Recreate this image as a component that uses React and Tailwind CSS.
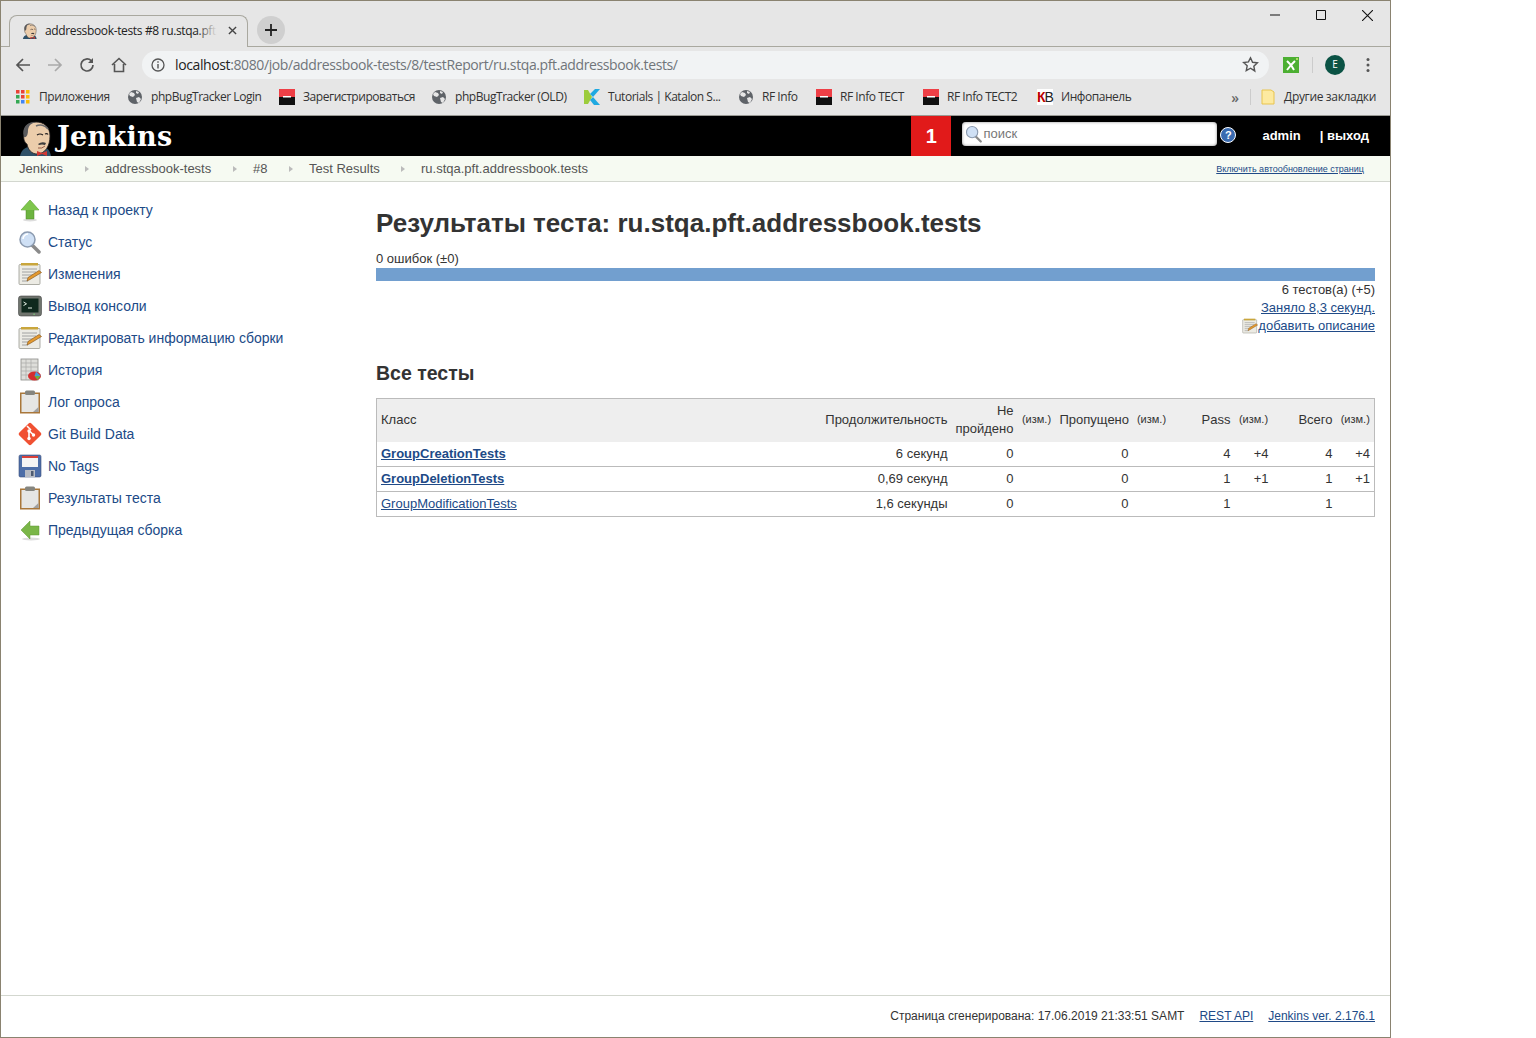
import React from "react";

const Jenkins = ({ className }) => (
  <svg className={className} viewBox="0 0 32 36">
    <path d="M0 36c1-5 4-8 8-9h16c4 1 6 4 7 9z" fill="#2f5168" />
    <path d="M4 15C3 6 9 2 16 2c8 0 14 5 14 14 0 10-5 18-13 18-5 0-9-4-10-10-2-1-4-5-3-9z" fill="#eccdab" stroke="#231f20" strokeWidth="0.8" />
    <path d="M4 17C1 7 8 1 17 2c-6 1-8 3-9 8 0 4-1 8-4 7z" fill="#5a5a5c" />
    <path d="M16 6c4-2 9-1 12 3" fill="none" stroke="#6b6b6d" strokeWidth="1.5" />
    <path d="M17 15q3-2 6 0M25 14q2-1 3 .5" fill="none" stroke="#231f20" strokeWidth="1.2" />
    <path d="M18 24q4-3 8-1l-1 2q-3-1-6 0z" fill="#3d3d3d" />
    <path d="M18 28q4 1 7-2" fill="none" stroke="#8a4f3c" strokeWidth="0.9" />
    <path d="M17 31l5 2 5-2v5l-5-2-5 2z" fill="#d33833" />
  </svg>
);

const Globe = () => (
  <svg className="w-4 h-4 shrink-0" viewBox="0 0 16 16">
    <circle cx="8" cy="8" r="7" fill="#5f6368" />
    <path d="M4 3l3 1 1 2-2 2-3-1-1-2zM9 9l3-1 2 2-2 4-2-1zM9 2l3 1-1 2-2-1z" fill="#e6e6e6" />
  </svg>
);

const Flag = () => (
  <svg className="w-4 h-4 shrink-0" viewBox="0 0 16 16">
    <rect width="16" height="8" fill="#ee3f46" />
    <rect y="8" width="16" height="8" fill="#111" />
    <rect x="4" y="7" width="8" height="1.5" fill="#fff" />
  </svg>
);

const Apps = () => (
  <svg className="w-4 h-4 shrink-0" viewBox="0 0 16 16">
    {[
      [1, 1, "#ea4335"], [6, 1, "#ea4335"], [11, 1, "#fbbc05"],
      [1, 6, "#34a853"], [6, 6, "#ea4335"], [11, 6, "#fbbc05"],
      [1, 11, "#34a853"], [6, 11, "#4285f4"], [11, 11, "#fbbc05"],
    ].map(([x, y, c], i) => (
      <rect key={i} x={x} y={y} width="3.5" height="3.5" fill={c} />
    ))}
  </svg>
);

const Katalon = () => (
  <svg className="w-4 h-4 shrink-0" viewBox="0 0 16 16">
    <path d="M0 1h4l4 7-4 7H0z" fill="#9ccc3c" />
    <path d="M11 0h5L9 8 6 5z" fill="#1fa9e1" />
    <path d="M6 11l3-3 7 8h-6z" fill="#1fa9e1" />
  </svg>
);

const Bookmark = ({ icon, label, w }) => (
  <div className={`flex items-center gap-2 shrink-0 ${w}`}>
    {icon}
    <span className="whitespace-nowrap text-[12px] tracking-[-0.45px] text-[#333]">{label}</span>
  </div>
);

const IconUp = () => (
  <svg viewBox="0 0 24 24" className="w-6 h-6">
    <ellipse cx="12" cy="22" rx="7" ry="1.5" fill="#ddd" />
    <path d="M12 2l9 10h-5v9H8v-9H3z" fill="#6cb33f" stroke="#4c8a26" strokeWidth="0.5" />
    <path d="M12 2l9 10H3z" fill="#7fc64d" />
  </svg>
);
const IconLeft = () => (
  <svg viewBox="0 0 24 24" className="w-6 h-6">
    <ellipse cx="13" cy="21" rx="9" ry="1.5" fill="#ddd" />
    <path d="M3 12l9-9v5h9v9h-9v4z" fill="#7ab648" stroke="#5c9430" strokeWidth="0.5" />
  </svg>
);
const IconSearch = () => (
  <svg viewBox="0 0 24 24" className="w-6 h-6">
    <path d="M14 15l7 7" stroke="#8a8a8a" strokeWidth="3.5" strokeLinecap="round" />
    <circle cx="9.5" cy="9.5" r="7.5" fill="#cfe0f5" stroke="#8c9bb0" strokeWidth="1.5" />
    <path d="M5 9a5 5 0 0 1 5-5" stroke="#fff" strokeWidth="1.5" fill="none" />
  </svg>
);
const IconNote = ({ className = "w-6 h-6" }) => (
  <svg viewBox="0 0 24 24" className={className}>
    <rect x="1" y="2.5" width="21" height="20" rx="1" fill="#ecebe4" stroke="#9a9a92" strokeWidth="0.8" />
    <rect x="3" y="1" width="17" height="2.5" fill="#c9a63c" />
    <path d="M4 7h15M4 10h14M4 13h11M4 16h8M4 19h6" stroke="#8f8f8f" strokeWidth="0.8" />
    <path d="M9 19l1-3.5L21 8.5l2.5 2-11.5 7z" fill="#e49a2f" stroke="#7d4f16" strokeWidth="0.6" />
  </svg>
);
const IconTerminal = () => (
  <svg viewBox="0 0 24 24" className="w-6 h-6">
    <rect x="0.5" y="2" width="23" height="20" rx="2.5" fill="#6f746d" stroke="#444" strokeWidth="0.6" />
    <rect x="3.5" y="4.5" width="17" height="14" fill="#10291e" />
    <path d="M5.5 8l3 1.8-3 1.8M10 14h4" stroke="#e6f0e6" strokeWidth="1" fill="none" />
    <rect x="15.5" y="19.6" width="1.2" height="1.2" fill="#7fe07f" />
  </svg>
);
const IconHistory = () => (
  <svg viewBox="0 0 24 24" className="w-6 h-6">
    <rect x="3" y="1" width="17" height="21" fill="#dededa" stroke="#8c8c88" strokeWidth="0.8" />
    <path d="M3 5h17M3 9h17M3 13h17M3 17h17M8 1v21M13 1v21" stroke="#aaaaa6" strokeWidth="0.7" />
    <ellipse cx="16.5" cy="18" rx="6.5" ry="4.5" fill="#d22f2f" />
    <path d="M16.5 18l1.5-4.5 5 4.5z" fill="#4a9bd6" />
    <path d="M16.5 18l3 4 3-4z" fill="#6cb33f" />
  </svg>
);
const IconClipboard = () => (
  <svg viewBox="0 0 24 24" className="w-6 h-6">
    <rect x="2" y="2.5" width="20" height="21" fill="#a9773a" />
    <rect x="3.5" y="4" width="17" height="18" fill="#e6e6e4" />
    <path d="M15 22l5.5-5V22z" fill="#a0a0a0" />
    <rect x="7" y="0.5" width="10" height="4.5" rx="1.5" fill="#85857f" />
  </svg>
);
const IconGit = () => (
  <svg viewBox="0 0 24 24" className="w-6 h-6">
    <rect x="3.5" y="3.5" width="17" height="17" rx="2" transform="rotate(45 12 12)" fill="#f05133" />
    <path d="M9 4l4 4M11 9v7M11.5 9l4 4" stroke="#fff" strokeWidth="1.6" fill="none" />
    <circle cx="11" cy="9" r="1.7" fill="#fff" />
    <circle cx="11" cy="16.5" r="1.7" fill="#fff" />
    <circle cx="15.5" cy="13" r="1.7" fill="#fff" />
  </svg>
);
const IconSave = () => (
  <svg viewBox="0 0 24 24" className="w-6 h-6">
    <rect x="1" y="1" width="22" height="22" rx="1.5" fill="#4d6ea8" stroke="#3a4e78" strokeWidth="0.6" />
    <rect x="4" y="2" width="16" height="11" fill="#f4f4f4" />
    <rect x="4" y="2" width="16" height="2" fill="#d9413a" />
    <rect x="7" y="16" width="10" height="7" fill="#b8bcc4" />
    <rect x="13" y="17" width="2.5" height="5" fill="#4d5a70" />
  </svg>
);

const sideItems = [
  [<IconUp />, "Назад к проекту"],
  [<IconSearch />, "Статус"],
  [<IconNote />, "Изменения"],
  [<IconTerminal />, "Вывод консоли"],
  [<IconNote />, "Редактировать информацию сборки"],
  [<IconHistory />, "История"],
  [<IconClipboard />, "Лог опроса"],
  [<IconGit />, "Git Build Data"],
  [<IconSave />, "No Tags"],
  [<IconClipboard />, "Результаты теста"],
  [<IconLeft />, "Предыдущая сборка"],
];

const crumbs = [
  ["Jenkins", "w-[86px]"],
  ["addressbook-tests", "w-[148px]"],
  ["#8", "w-[56px]"],
  ["Test Results", "w-[112px]"],
  ["ru.stqa.pft.addressbook.tests", ""],
];

const rows = [
  ["GroupCreationTests", true, "6 секунд", "0", "0", "4", "+4", "4", "+4"],
  ["GroupDeletionTests", true, "0,69 секунд", "0", "0", "1", "+1", "1", "+1"],
  ["GroupModificationTests", false, "1,6 секунды", "0", "0", "1", "", "1", ""],
];

const Delta = () => <th className="px-0 pb-[2px] text-center text-[11px] font-normal whitespace-nowrap">(изм.)</th>;

export default function App() {
  return (
    <div className="w-[1536px] h-[1038px] bg-white font-['Liberation_Sans',Arial,sans-serif] text-[#333] overflow-hidden">
      <div className="w-[1391px] h-[1038px] flex flex-col border-x border-y border-[#8a8370] box-border">
        {/* tab strip */}
        <div className="h-[45px] shrink-0 bg-[#e6e6e6] flex items-end relative font-['Open_Sans',sans-serif]">
          <div className="ml-2 w-[239px] h-[32px] pb-[2px] bg-[#e6e6e6] border border-b-0 border-[#a9a89f] rounded-t-lg flex items-center pl-3 pr-2 relative -mb-px z-10">
            <Jenkins className="w-4 h-4 shrink-0" />
            <span className="ml-[7px] w-[172px] shrink-0 overflow-hidden whitespace-nowrap text-[12px] text-[#222] tracking-[-0.35px] relative">
              addressbook-tests #8 ru.stqa.pft.a
              <span className="absolute right-0 top-0 bottom-0 w-5 bg-gradient-to-r from-transparent to-[#e6e6e6]" />
            </span>
            <svg viewBox="0 0 10 10" className="ml-[11px] w-[9px] h-[9px]"><path d="M1 1l8 8M9 1l-8 8" stroke="#444" strokeWidth="1.5" /></svg>
          </div>
          <div className="ml-[9px] mb-[2px] w-[28px] h-[28px] rounded-full bg-[#cfcfcf] flex items-center justify-center">
            <svg viewBox="0 0 12 12" className="w-3 h-3"><path d="M6 0v12M0 6h12" stroke="#222" strokeWidth="1.8" /></svg>
          </div>
          <div className="absolute top-0 right-0 flex h-[28px]">
            <div className="w-[46px] flex items-center justify-center"><svg viewBox="0 0 10 10" className="w-[10px] h-[10px]"><path d="M0 5h10" stroke="#111" /></svg></div>
            <div className="w-[46px] flex items-center justify-center"><svg viewBox="0 0 10 10" className="w-[10px] h-[10px]"><path d="M.5.5h9v9h-9z" stroke="#111" fill="none" /></svg></div>
            <div className="w-[46px] flex items-center justify-center"><svg viewBox="0 0 10 10" className="w-[11px] h-[11px]"><path d="M0 0l10 10M10 0L0 10" stroke="#111" /></svg></div>
          </div>
        </div>
        {/* toolbar */}
        <div className="h-[38px] shrink-0 bg-[#e6e6e6] border-t border-[#a9a89f] flex items-center pl-[14px] pr-[14px] pb-[2px] font-['Open_Sans',sans-serif]">
          <svg viewBox="0 0 16 16" className="w-4 h-4"><path d="M15 8H2M8 2L2 8l6 6" stroke="#555" strokeWidth="1.7" fill="none" /></svg>
          <svg viewBox="0 0 16 16" className="w-4 h-4 ml-4"><path d="M1 8h13M8 2l6 6-6 6" stroke="#aaa" strokeWidth="1.7" fill="none" /></svg>
          <svg viewBox="0 0 16 16" className="w-4 h-4 ml-4"><path d="M14 8a6 6 0 1 1-1.8-4.3" stroke="#555" strokeWidth="1.7" fill="none" /><path d="M14 1v5H9z" fill="#555" /></svg>
          <svg viewBox="0 0 16 16" className="w-4 h-4 ml-4"><path d="M1 8l7-6.5L15 8M3.5 7v7.5h9V7" stroke="#555" strokeWidth="1.6" fill="none" /></svg>
          <div className="ml-[15px] w-[1127px] h-[28px] rounded-full bg-[#f1f3f4] flex items-center pl-[9px] pr-[10px]">
            <svg viewBox="0 0 14 14" className="w-[14px] h-[14px] shrink-0"><circle cx="7" cy="7" r="6" stroke="#555" strokeWidth="1.3" fill="none" /><path d="M7 6v4.5M7 3.3v1.5" stroke="#555" strokeWidth="1.4" /></svg>
            <span className="ml-[10px] text-[14px] whitespace-nowrap text-[#222] tracking-[-0.39px]">localhost<span className="text-[#70757a]">:8080/job/addressbook-tests/8/testReport/ru.stqa.pft.addressbook.tests/</span></span>
            <svg viewBox="0 0 24 24" className="w-[17px] h-[17px] ml-auto"><path d="M12 2.5l2.9 6.3 6.8.8-5 4.7 1.3 6.8L12 17.3 6 20.6l1.3-6.8-5-4.7 6.8-.8z" stroke="#555" strokeWidth="2" fill="none" /></svg>
          </div>
          <svg viewBox="0 0 16 16" className="w-4 h-4 ml-[14px]"><rect width="16" height="16" fill="#4caf32" /><path d="M4 4l4 4-4 5M8 8l4-4M8 8l3 5" stroke="#fff" strokeWidth="2" fill="none" /><circle cx="14" cy="2" r="1" fill="#cef070" /></svg>
          <div className="ml-[13px] w-px h-4 bg-[#ccc]" />
          <div className="ml-[12px] w-5 h-5 rounded-full bg-[#0b5345] flex items-center justify-center text-[10px] text-white">E</div>
          <svg viewBox="0 0 4 16" className="w-1 h-4 ml-[21px]"><circle cx="2" cy="2.5" r="1.5" fill="#555" /><circle cx="2" cy="8" r="1.5" fill="#555" /><circle cx="2" cy="13.5" r="1.5" fill="#555" /></svg>
        </div>
        {/* bookmarks */}
        <div className="h-[32px] shrink-0 bg-[#e6e6e6] border-b border-[#9a9a94] flex items-center pl-[14px] pb-[5px] font-['Open_Sans',sans-serif] relative">
          <Bookmark icon={<Apps />} label="Приложения" w="w-[112px]" />
          <Bookmark icon={<Globe />} label="phpBugTracker Login" w="w-[152px]" />
          <Bookmark icon={<Flag />} label="Зарегистрироваться" w="w-[152px]" />
          <Bookmark icon={<Globe />} label="phpBugTracker (OLD)" w="w-[153px]" />
          <Bookmark icon={<Katalon />} label="Tutorials | Katalon S..." w="w-[154px]" />
          <Bookmark icon={<Globe />} label="RF Info" w="w-[78px]" />
          <Bookmark icon={<Flag />} label="RF Info ТЕСТ" w="w-[107px]" />
          <Bookmark icon={<Flag />} label="RF Info ТЕСТ2" w="w-[114px]" />
          <Bookmark
            icon={
              <span className="w-4 h-4 bg-white flex items-center justify-center text-[14px] font-['Liberation_Sans',sans-serif] leading-none tracking-[-1px]">
                <span className="font-bold text-[#b00]">К</span>
                <span className="text-[#222]">В</span>
              </span>
            }
            label="Инфопанель"
            w="w-[100px]"
          />
          <div className="ml-auto flex items-center pr-[14px]">
            <span className="text-[14px] font-semibold text-[#666]">»</span>
            <div className="ml-[11px] w-px h-4 bg-[#ccc]" />
            <svg viewBox="0 0 16 16" className="ml-[9px] w-4 h-4"><path d="M2 1h9l3 2v12H2z" fill="#fdeaa0" stroke="#e8c44f" /></svg>
            <span className="ml-2 text-[12px] tracking-[-0.35px] text-[#333]">Другие закладки</span>
          </div>
        </div>
        {/* jenkins header */}
        <div className="h-[40px] shrink-0 bg-black flex items-center">
          <Jenkins className="ml-[19px] w-[32px] h-[36px] mt-1 shrink-0" />
          <span className="ml-[5px] font-['DejaVu_Serif',serif] font-bold text-[27px] tracking-[0.3px] text-white leading-none">Jenkins</span>
          <div className="ml-auto w-[40px] h-full bg-[#e11a1a] flex items-center justify-center text-white font-bold text-[20px]">1</div>
          <div className="ml-[11px] mb-[4px] w-[255px] h-[24px] bg-white rounded-[4px] flex items-center pl-[3px] shadow-[inset_0_0_3px_#888]">
            <svg viewBox="0 0 24 24" className="w-[18px] h-[18px] shrink-0"><path d="M14 15l7 7" stroke="#8a8a8a" strokeWidth="3" strokeLinecap="round" /><circle cx="9.5" cy="9.5" r="7.5" fill="#cfe0f5" stroke="#8c9bb0" strokeWidth="1.5" /></svg>
            <span className="text-[13px] text-[#777]">поиск</span>
          </div>
          <div className="ml-[3px] mb-[2px] w-4 h-4 rounded-full bg-[#3a6bb0] border border-white flex items-center justify-center text-white text-[11px] font-bold">?</div>
          <span className="ml-[26px] text-[13px] font-bold text-white">admin</span>
          <span className="ml-[19px] mr-[21px] text-[13px] font-bold text-white">| выход</span>
        </div>
        {/* breadcrumbs */}
        <div className="h-[26px] shrink-0 bg-[#f6faf2] border-b border-[#d3d7cf] flex items-center pl-[18px] pr-[26px] text-[13px] text-[#555]">
          {crumbs.map(([label, w], i) => (
            <div key={label} className={`flex items-center shrink-0 ${w}`}>
              <span>{label}</span>
              {i < crumbs.length - 1 && <span className="ml-auto mr-[16px] w-0 h-0 border-y-[3px] border-y-transparent border-l-[4px] border-l-[#bbb]" />}
            </div>
          ))}
          <span className="ml-auto mt-[2px] text-[9px] text-[#204a87] underline">Включить автообновление страниц</span>
        </div>
        {/* content */}
        <div className="flex-1 flex min-h-0">
          <div className="w-[375px] shrink-0 pt-[12px] pl-[17px]">
            {sideItems.map(([icon, label]) => (
              <div key={label} className="h-[32px] flex items-center gap-[6px]">
                {icon}
                <span className="text-[14px] text-[#204a87]">{label}</span>
              </div>
            ))}
          </div>
          <div className="flex-1 pr-[15px]">
            <h1 className="mt-[26px] text-[26px] leading-[30px] font-bold">Результаты теста: ru.stqa.pft.addressbook.tests</h1>
            <div className="mt-[13px] text-[13px] leading-[15px]">0 ошибок (±0)</div>
            <div className="mt-[2px] h-[13px] bg-[#729fcf]" />
            <div className="text-right text-[13px] leading-[18px]">
              <div>6 тестов(а) (+5)</div>
              <div className="text-[#204a87] underline">Заняло 8,3 секунд.</div>
              <div className="flex justify-end items-center text-[#204a87] underline">
                <IconNote className="w-4 h-4" />
                добавить описание
              </div>
            </div>
            <h2 className="mt-[26px] text-[19.5px] leading-[24px] font-bold">Все тесты</h2>
            <table className="mt-[13px] w-full table-fixed border border-[#bbb] border-collapse text-[13px]">
              <colgroup>
                <col />
                <col className="w-[134px]" />
                <col className="w-[66px]" />
                <col className="w-[38px]" />
                <col className="w-[77px]" />
                <col className="w-[38px]" />
                <col className="w-[64px]" />
                <col className="w-[38px]" />
                <col className="w-[64px]" />
                <col className="w-[38px]" />
              </colgroup>
              <thead>
                <tr className="h-[43px] bg-[#eeeeee]">
                  <th className="px-1 pb-[2px] text-left font-normal">Класс</th>
                  <th className="px-1 pb-[2px] text-right font-normal whitespace-nowrap">Продолжительность</th>
                  <th className="px-1 text-right font-normal leading-[18px]">Не пройдено</th>
                  <Delta />
                  <th className="px-1 pb-[2px] text-right font-normal">Пропущено</th>
                  <Delta />
                  <th className="px-1 pb-[2px] text-right font-normal">Pass</th>
                  <Delta />
                  <th className="px-1 pb-[2px] text-right font-normal">Всего</th>
                  <Delta />
                </tr>
              </thead>
              <tbody>
                {rows.map((r) => (
                  <tr key={r[0]} className="h-[25px] border-b border-[#bbb]">
                    <td className={`px-1 text-[#204a87] underline ${r[1] ? "font-bold" : ""}`}>{r[0]}</td>
                    <td className="px-1 text-right">{r[2]}</td>
                    <td className="px-1 text-right">{r[3]}</td>
                    <td />
                    <td className="px-1 text-right">{r[4]}</td>
                    <td />
                    <td className="px-1 text-right">{r[5]}</td>
                    <td className="px-1 text-right">{r[6]}</td>
                    <td className="px-1 text-right">{r[7]}</td>
                    <td className="px-1 text-right">{r[8]}</td>
                  </tr>
                ))}
              </tbody>
            </table>
          </div>
        </div>
        {/* footer */}
        <div className="h-[42px] shrink-0 border-t border-[#d3d7cf] flex items-center justify-end pr-[15px] pb-[2px] text-[12px]">
          <span>Страница сгенерирована: 17.06.2019 21:33:51 SAMT</span>
          <span className="ml-[15px] text-[#204a87] underline">REST API</span>
          <span className="ml-[15px] text-[#204a87] underline">Jenkins ver. 2.176.1</span>
        </div>
      </div>
    </div>
  );
}
